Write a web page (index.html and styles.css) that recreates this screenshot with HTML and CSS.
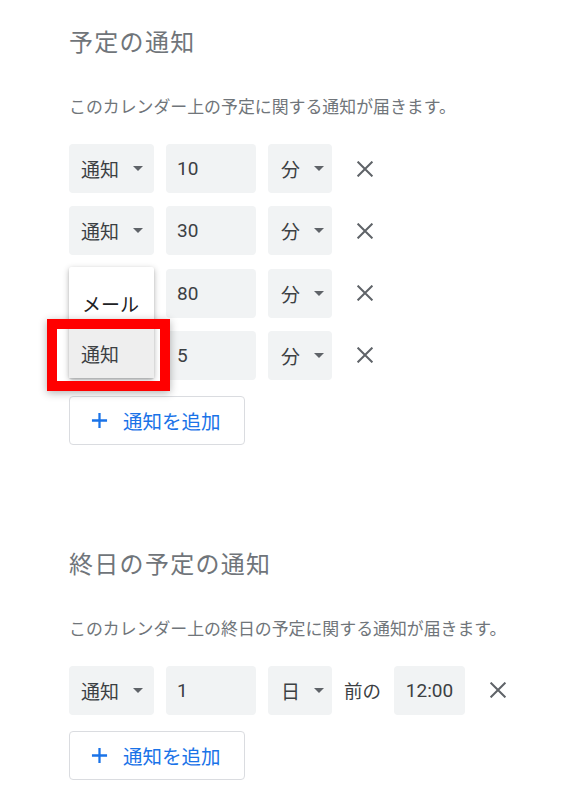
FILE: index.html
```html
<!DOCTYPE html>
<html lang="ja">
<head>
<meta charset="utf-8">
<title>通知設定</title>
<link rel="stylesheet" href="styles.css">
</head>
<body>
<div class="page">
  <section class="section">
    <h2 class="title">予定の通知</h2>
    <p class="desc">このカレンダー上の予定に関する通知が届きます。</p>
    <div class="rows">
      <div class="row">
        <div class="field select"><span>通知</span><span class="caret"></span></div>
        <div class="field number">10</div>
        <div class="field unit"><span>分</span><span class="caret"></span></div>
        <button class="remove" aria-label="削除"><svg viewBox="0 0 16 16" width="16" height="16"><path d="M0.6 0.6 15.4 15.4M15.4 0.6 0.6 15.4" stroke="#5f6368" stroke-width="2" fill="none"/></svg></button>
      </div>
      <div class="row">
        <div class="field select"><span>通知</span><span class="caret"></span></div>
        <div class="field number">30</div>
        <div class="field unit"><span>分</span><span class="caret"></span></div>
        <button class="remove" aria-label="削除"><svg viewBox="0 0 16 16" width="16" height="16"><path d="M0.6 0.6 15.4 15.4M15.4 0.6 0.6 15.4" stroke="#5f6368" stroke-width="2" fill="none"/></svg></button>
      </div>
      <div class="row">
        <div class="select-wrap">
          <div class="field select"></div>
          <div class="menu">
            <div class="menu-item menu-item--first">メール</div>
            <div class="menu-item menu-item--active">通知</div>
          </div>
          <div class="highlight"></div>
        </div>
        <div class="field number">80</div>
        <div class="field unit"><span>分</span><span class="caret"></span></div>
        <button class="remove" aria-label="削除"><svg viewBox="0 0 16 16" width="16" height="16"><path d="M0.6 0.6 15.4 15.4M15.4 0.6 0.6 15.4" stroke="#5f6368" stroke-width="2" fill="none"/></svg></button>
      </div>
      <div class="row">
        <div class="field select"></div>
        <div class="field number">5</div>
        <div class="field unit"><span>分</span><span class="caret"></span></div>
        <button class="remove" aria-label="削除"><svg viewBox="0 0 16 16" width="16" height="16"><path d="M0.6 0.6 15.4 15.4M15.4 0.6 0.6 15.4" stroke="#5f6368" stroke-width="2" fill="none"/></svg></button>
      </div>
    </div>
    <button class="add"><svg viewBox="0 0 18 18" width="17" height="17"><path d="M9 1v16M1 9h16" stroke="#1a73e8" stroke-width="2.4" fill="none"/></svg><span>通知を追加</span></button>
  </section>

  <section class="section section--allday">
    <h2 class="title">終日の予定の通知</h2>
    <p class="desc">このカレンダー上の終日の予定に関する通知が届きます。</p>
    <div class="rows">
      <div class="row">
        <div class="field select"><span>通知</span><span class="caret"></span></div>
        <div class="field number">1</div>
        <div class="field unit"><span>日</span><span class="caret"></span></div>
        <span class="before">前の</span>
        <div class="field time">12:00</div>
        <button class="remove" aria-label="削除"><svg viewBox="0 0 16 16" width="16" height="16"><path d="M0.6 0.6 15.4 15.4M15.4 0.6 0.6 15.4" stroke="#5f6368" stroke-width="2" fill="none"/></svg></button>
      </div>
    </div>
    <button class="add"><svg viewBox="0 0 18 18" width="17" height="17"><path d="M9 1v16M1 9h16" stroke="#1a73e8" stroke-width="2.4" fill="none"/></svg><span>通知を追加</span></button>
  </section>
</div>
</body>
</html>
```

FILE: styles.css
```css
* { box-sizing: border-box; }

html, body {
  margin: 0;
  padding: 0;
  background: #ffffff;
}

body {
  font-family: Roboto, "Noto Sans CJK JP", sans-serif;
  color: #3c4043;
}

.page {
  padding: 27px 0 0 69px;
  width: 567px;
  height: 800px;
  overflow: hidden;
}

.section--allday {
  margin-top: 104px;
}

.title {
  margin: 0;
  font-size: 24px;
  line-height: 32px;
  font-weight: 400;
  letter-spacing: 1.3px;
  color: #70757a;
}

.desc {
  margin: 36px 0 0 0;
  font-size: 16.9px;
  line-height: 24px;
  color: #70757a;
}

.rows {
  margin-top: 25px;
  display: flex;
  flex-direction: column;
  gap: 13.33px;
}

.row {
  display: flex;
  align-items: center;
  gap: 12px;
  height: 49px;
}

.field {
  height: 49px;
  background: #f1f3f4;
  border-radius: 4px;
  display: flex;
  align-items: center;
  font-size: 19px;
  color: #3c4043;
}

.select {
  width: 85px;
  padding-left: 12px;
}

.select .caret { margin-left: 14px; }

.number {
  width: 90px;
  padding-left: 11px;
  font-size: 19px;
}

.unit {
  width: 64px;
  padding-left: 13px;
}

.unit .caret { margin-left: 14px; }

.time {
  width: 71px;
  justify-content: center;
  font-size: 19px;
}

.caret {
  width: 0;
  height: 0;
  border-left: 5px solid transparent;
  border-right: 5px solid transparent;
  border-top: 5px solid #5f6368;
}

.before {
  width: 38px;
  font-size: 18.5px;
  color: #3c4043;
}

.remove {
  width: 42px;
  height: 42px;
  padding: 0;
  border: 0;
  background: transparent;
  display: flex;
  align-items: center;
  justify-content: center;
}

.add {
  margin-top: 16px;
  width: 176px;
  height: 49px;
  padding: 0 0 0 21px;
  background: #ffffff;
  border: 1px solid #dadce0;
  border-radius: 4px;
  display: flex;
  align-items: center;
  gap: 15px;
  font-family: Roboto, "Noto Sans CJK JP", sans-serif;
  font-size: 19.5px;
  color: #1a73e8;
}

/* dropdown overlay */
.select-wrap {
  position: relative;
  width: 85px;
  height: 49px;
}

.menu {
  position: absolute;
  left: 0;
  top: -2px;
  width: 85px;
  background: #ffffff;
  box-shadow: 0 2px 6px rgba(0, 0, 0, 0.28), 0 1px 2px rgba(0, 0, 0, 0.12);
  border-radius: 2px;
  z-index: 2;
}

.menu-item {
  display: flex;
  align-items: center;
  padding-left: 13px;
  height: 49px;
  font-size: 19px;
  color: #202124;
}

.menu-item--first {
  height: 62px;
  padding-top: 12px;
}

.menu-item--active {
  background: #eeeeee;
  padding-left: 12px;
  color: #3c4043;
}

.highlight {
  position: absolute;
  left: -22px;
  top: 50px;
  width: 123px;
  height: 72px;
  border: 10px solid #ff0000;
  box-shadow: 0 2px 8px rgba(0, 0, 0, 0.3);
  z-index: 3;
}
```
